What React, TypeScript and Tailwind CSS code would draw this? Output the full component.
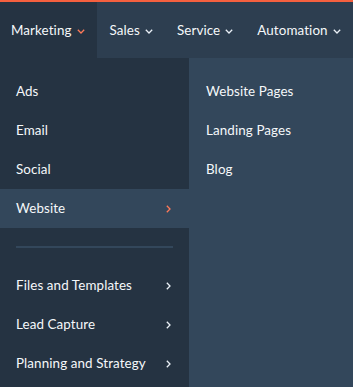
import React from "react";

const font = { fontFamily: "Lato, 'Noto Sans', sans-serif" };

function Down({ orange }: { orange?: boolean }) {
  return (
    <svg width="8" height="5" viewBox="0 0 8 5" className="ml-[5px] mt-[2px]">
      <path d="M0.8 0.8 L4 4 L7.2 0.8" fill="none" stroke={orange ? "#ff7a59" : "#eaf0f6"} strokeWidth="1.3" />
    </svg>
  );
}

function Right({ orange }: { orange?: boolean }) {
  return (
    <svg width="5" height="8" viewBox="0 0 5 8">
      <path d="M0.8 0.8 L4 4 L0.8 7.2" fill="none" stroke={orange ? "#ff7a59" : "#eaf0f6"} strokeWidth="1.3" />
    </svg>
  );
}

const tabs = ["Sales", "Service", "Automation"];
const left = ["Ads", "Email", "Social"];
const lower = ["Files and Templates", "Lead Capture", "Planning and Strategy"];
const right = ["Website Pages", "Landing Pages", "Blog"];

export default function App() {
  return (
    <div className="w-[353px] h-[387px] overflow-hidden bg-[#33475b] text-[#f5f8fa] text-[13.4px] tracking-[0.1px] flex flex-col" style={font}>
      <div className="h-[2px] bg-[#f5603f]" />
      <div className="h-[56px] flex bg-[#2d3e50]">
        <div className="flex items-center pl-[11px] pr-[12px] bg-[#253342]">
          Marketing
          <Down orange />
        </div>
        {tabs.map((t) => (
          <div key={t} className="flex items-center pl-[13px] pr-[11px]">
            {t}
            <Down />
          </div>
        ))}
      </div>
      <div className="flex flex-1">
        <div className="w-[189px] bg-[#253342] pt-[14px]">
          {left.map((t) => (
            <div key={t} className="h-[39px] flex items-center px-4">
              {t}
            </div>
          ))}
          <div className="h-[39px] flex items-center justify-between pl-4 pr-[18px] bg-[#33475b]">
            Website
            <Right orange />
          </div>
          <div className="h-[2px] bg-[#33475b] mx-4 mt-[18px] mb-[18px]" />
          {lower.map((t) => (
            <div key={t} className="h-[39px] flex items-center justify-between pl-4 pr-[18px]">
              {t}
              <Right />
            </div>
          ))}
        </div>
        <div className="flex-1 pt-[14px]">
          {right.map((t) => (
            <div key={t} className="h-[39px] flex items-center pl-[17px]">
              {t}
            </div>
          ))}
        </div>
      </div>
    </div>
  );
}
